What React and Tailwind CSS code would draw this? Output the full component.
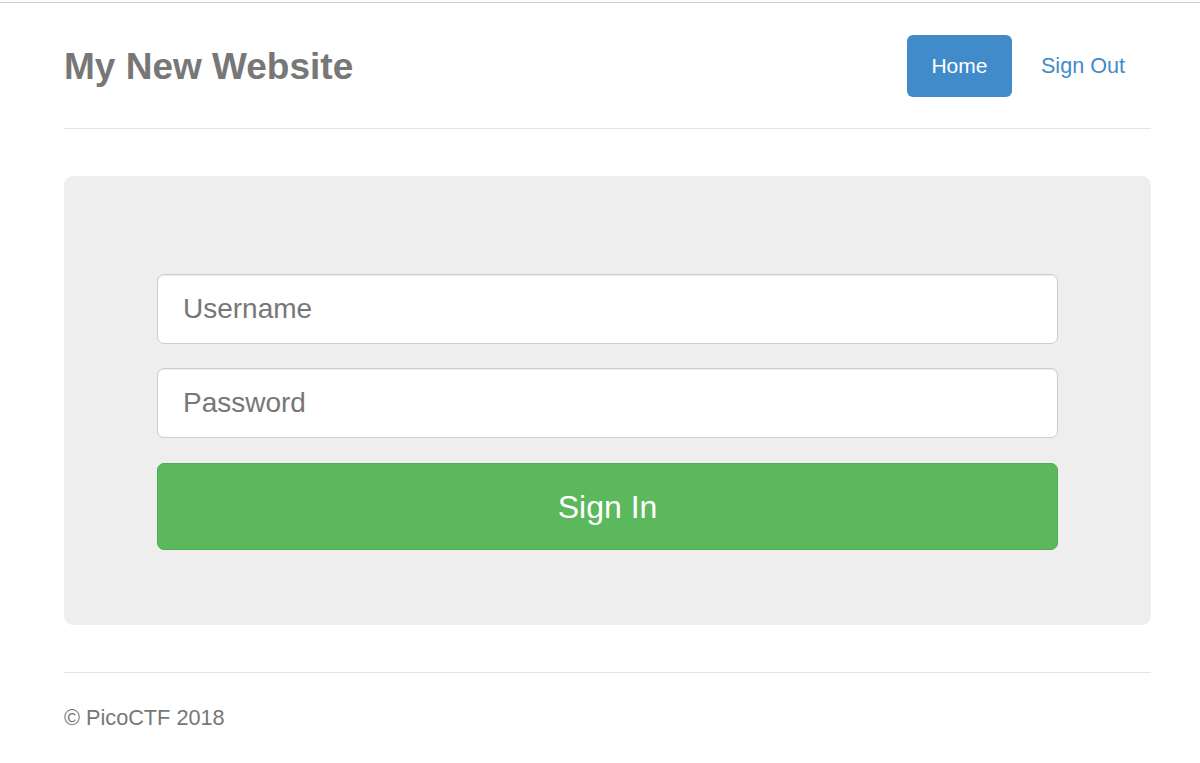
export default function App() {
  return (
    <div className="min-h-screen bg-white font-['Liberation_Sans',Arial,sans-serif]">
      {/* top hairline */}
      <div className="mt-[2px] h-px bg-[#cfcfcf]" />

      <div className="ml-[64px] w-[1087px]">
        {/* header */}
        <header className="flex items-center justify-between border-b border-[#e5e5e5] pt-[32px] pb-[31px]">
          <h3 className="text-[37px] font-bold leading-none text-[#777]">My New Website</h3>
          <nav className="flex items-center">
            <a
              href="#"
              className="flex h-[62px] w-[105px] items-center justify-center rounded-[6px] bg-[#428bca] text-[21px] text-white"
            >
              Home
            </a>
            <a href="#" className="ml-[29px] mr-[26px] text-[21.6px] text-[#428bca]">
              Sign Out
            </a>
          </nav>
        </header>

        {/* jumbotron */}
        <div className="mt-[47px] rounded-[9px] bg-[#eee] px-[93px] pt-[98px] pb-[75px]">
          <form className="flex flex-col" onSubmit={(e) => e.preventDefault()}>
            <input
              type="text"
              placeholder="Username"
              className="h-[70px] w-full rounded-[7px] border border-[#ccc] bg-white px-[25px] text-[28px] text-[#555] shadow-[inset_0_1px_1px_rgba(0,0,0,0.075)] outline-none placeholder:text-[#777]"
            />
            <input
              type="password"
              placeholder="Password"
              className="mt-[24px] h-[70px] w-full rounded-[7px] border border-[#ccc] bg-white px-[25px] text-[28px] text-[#555] shadow-[inset_0_1px_1px_rgba(0,0,0,0.075)] outline-none placeholder:text-[#777]"
            />
            <button
              type="submit"
              className="mt-[25px] h-[87px] w-full rounded-[7px] border border-[#4cae4c] bg-[#5cb85c] text-[32px] text-white"
            >
              Sign In
            </button>
          </form>
        </div>

        {/* footer */}
        <footer className="mt-[47px] border-t border-[#e5e5e5] pt-[30px]">
          <p className="text-[21.7px] leading-[30px] text-[#777]">© PicoCTF 2018</p>
        </footer>
      </div>
    </div>
  );
}
